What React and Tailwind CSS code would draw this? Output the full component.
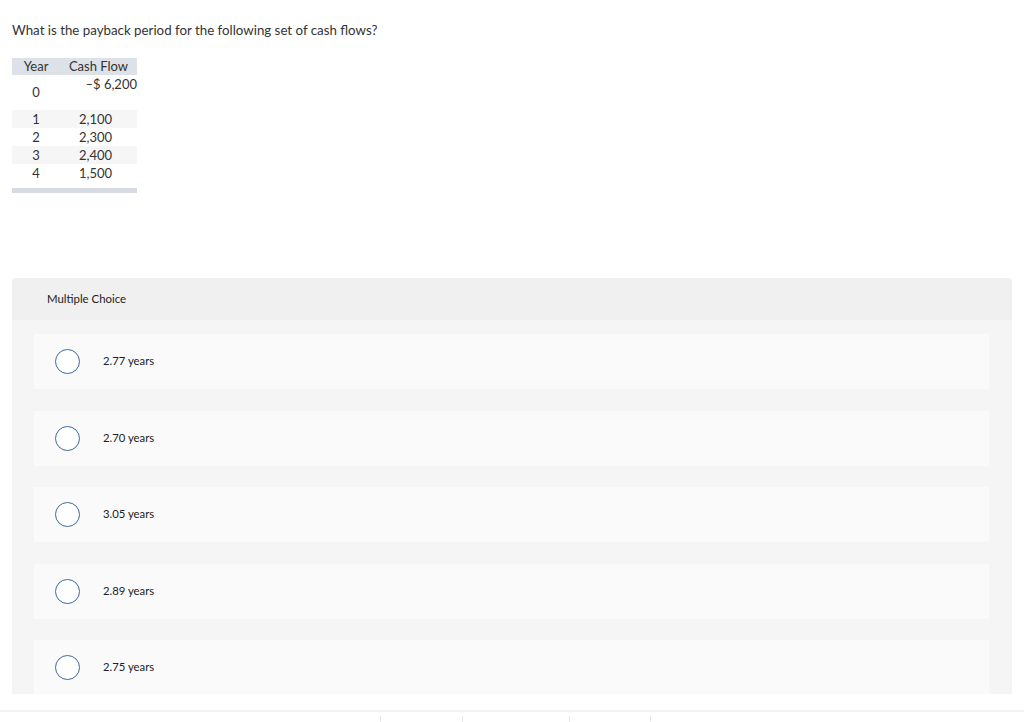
import React from "react";

const rows = [
  { year: "1", cash: "2,100", shade: true },
  { year: "2", cash: "2,300", shade: false },
  { year: "3", cash: "2,400", shade: true },
  { year: "4", cash: "1,500", shade: false },
];

const choices = ["2.77 years", "2.70 years", "3.05 years", "2.89 years", "2.75 years"];

const Choice = ({ label }) => (
  <div className="h-[55px] shrink-0 bg-[#fafafa] flex items-center pl-[21px]">
    <span className="w-[25px] h-[25px] rounded-full border-[1.5px] border-[#3d6a9e] bg-white" />
    <span className="ml-[23px] text-[11.3px] text-[#222]">{label}</span>
  </div>
);

export default function App() {
  return (
    <div
      className="w-[1024px] h-[722px] bg-white text-[#333] overflow-hidden flex flex-col"
      style={{ fontFamily: "Lato, 'Open Sans', sans-serif" }}
    >
      <div className="pl-[12px] pt-[22px] text-[13.3px] leading-[16px]">
        What is the payback period for the following set of cash flows?
      </div>

      {/* cash flow table */}
      <div className="ml-[12px] mt-[20px] w-[125px] text-[13px]">
        <div className="flex h-[17px] bg-[#dde1e8] items-center leading-none">
          <div className="w-[48px] text-center">Year</div>
          <div className="flex-1 text-center">Cash Flow</div>
        </div>
        <div className="flex h-[35px]">
          <div className="w-[48px] flex items-center justify-center">0</div>
          <div className="flex-1 text-right pt-[1px] leading-[16px]">–$ 6,200</div>
        </div>
        {rows.map((r) => (
          <div
            key={r.year}
            className={`flex h-[18px] items-center leading-none ${r.shade ? "bg-[#f6f6f6]" : ""}`}
          >
            <div className="w-[48px] text-center">{r.year}</div>
            <div className="flex-1 text-center pr-[6px]">{r.cash}</div>
          </div>
        ))}
        <div className="h-[5px] mt-[6px] bg-[#d6dbe3]" />
      </div>

      {/* multiple choice panel */}
      <div className="mx-[12px] mt-[85px] h-[416px] bg-[#f5f5f5] rounded-t-[3px] overflow-hidden flex flex-col">
        <div className="h-[42px] shrink-0 bg-[#f0f0f0] flex items-center pl-[35px] text-[11.4px] text-[#222]">
          Multiple Choice
        </div>
        <div className="flex flex-col gap-[21.5px] pt-[14px] pl-[22px] pr-[23px]">
          {choices.map((c) => (
            <Choice key={c} label={c} />
          ))}
        </div>
      </div>

      {/* bottom toolbar (cut off) */}
      <div className="mt-[16px] border-t-2 border-[#f3f3f3] flex pt-[4px] h-[12px]">
        <div className="ml-[380px] w-[82px] border-l border-[#e8e8e8]" />
        <div className="w-[107px] border-l border-[#e8e8e8]" />
        <div className="w-[81px] border-l border-[#e8e8e8]" />
        <div className="w-[1px] border-l border-[#e8e8e8]" />
      </div>
    </div>
  );
}
